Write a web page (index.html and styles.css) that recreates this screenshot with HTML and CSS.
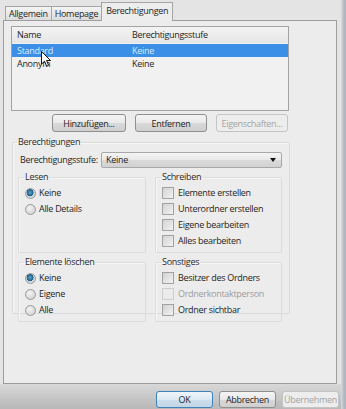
FILE: index.html
```html
<!DOCTYPE html>
<html lang="de">
<head>
    <meta charset="UTF-8">
    <title>Eigenschaften - Berechtigungen</title>
    <link rel="stylesheet" href="styles.css">
</head>
<body>
<div class="window">
    <div class="dialog">
        <div class="tabs">
            <div class="tab">Allgemein</div>
            <div class="tab">Homepage</div>
            <div class="tab active">Berechtigungen</div>
        </div>

        <div class="panel">
            <div class="list">
                <div class="list-head">
                    <span class="col-name">Name</span>
                    <span>Berechtigungsstufe</span>
                </div>
                <div class="list-row selected">
                    <span class="col-name">Standard</span>
                    <span>Keine</span>
                </div>
                <div class="list-row">
                    <span class="col-name">Anonym</span>
                    <span>Keine</span>
                </div>
                <!-- mouse pointer from the screen capture -->
                <svg class="cursor" width="11" height="17" viewBox="0 0 11 17">
                    <path d="M0.5 0.5 L0.5 13 L3.5 10.2 L5.6 15.2 L7.6 14.3 L5.6 9.5 L9.5 9.5 Z" fill="#fff" stroke="#111" stroke-width="1"/>
                </svg>
            </div>

            <div class="list-buttons">
                <button class="btn btn-wide">Hinzufügen...</button>
                <button class="btn">Entfernen</button>
                <button class="btn" disabled>Eigenschaften...</button>
            </div>

            <fieldset class="group">
                <legend>Berechtigungen</legend>
                <div class="level-row">
                    <span class="level-label">Berechtigungsstufe:</span>
                    <div class="dropdown">
                        <span>Keine</span>
                        <span class="arrow"></span>
                    </div>
                </div>

                <div class="sub-groups">
                    <fieldset class="sub">
                        <legend>Lesen</legend>
                        <div class="opt"><span class="radio checked"></span>Keine</div>
                        <div class="opt"><span class="radio"></span>Alle Details</div>
                    </fieldset>

                    <fieldset class="sub">
                        <legend>Schreiben</legend>
                        <div class="opt"><span class="check"></span>Elemente erstellen</div>
                        <div class="opt"><span class="check"></span>Unterordner erstellen</div>
                        <div class="opt"><span class="check"></span>Eigene bearbeiten</div>
                        <div class="opt"><span class="check"></span>Alles bearbeiten</div>
                    </fieldset>

                    <fieldset class="sub">
                        <legend>Elemente löschen</legend>
                        <div class="opt"><span class="radio checked"></span>Keine</div>
                        <div class="opt"><span class="radio"></span>Eigene</div>
                        <div class="opt"><span class="radio"></span>Alle</div>
                    </fieldset>

                    <fieldset class="sub">
                        <legend>Sonstiges</legend>
                        <div class="opt"><span class="check"></span>Besitzer des Ordners</div>
                        <div class="opt disabled"><span class="check"></span>Ordnerkontaktperson</div>
                        <div class="opt"><span class="check"></span>Ordner sichtbar</div>
                    </fieldset>
                </div>
            </fieldset>
        </div>

        <div class="footer">
            <button class="btn btn-default">OK</button>
            <button class="btn">Abbrechen</button>
            <button class="btn" disabled>Übernehmen</button>
        </div>
    </div>
    <div class="frame"></div>
</div>
</body>
</html>
```

FILE: styles.css
```css
body {
    margin: 0;
    font-family: "Open Sans", "Noto Sans", sans-serif;
    font-size: 9px;
    line-height: 12px;
    letter-spacing: -0.3px;
    color: #1e1e1e;
    background-color: #e4e4e4;
}
.window {
    display: flex;
    width: 346px;
    height: 409px;
    overflow: hidden;
}
.dialog {
    width: 341px;
    display: flex;
    flex-direction: column;
}
.frame {
    width: 5px;
    background: linear-gradient(to right, #d2d5da 0, #d2d5da 1px, #b9c0c9 2px, #aab2bd 100%);
}

/* tabs */
.tabs {
    height: 20px;
    display: flex;
    align-items: flex-end;
    padding-left: 5px;
}
.tab {
    height: 13px;
    line-height: 13px;
    padding: 0 3px;
    border: 1px solid #a5a5a5;
    border-bottom: none;
    border-right: none;
    background: linear-gradient(#f4f4f4, #dcdcdc);
}
.tab.active {
    height: 18px;
    line-height: 16px;
    padding: 0 4px;
    margin-bottom: -1px;
    border-right: 1px solid #a5a5a5;
    background: #ededed;
    position: relative;
    z-index: 1;
}

/* tab page */
.panel {
    height: 357px;
    margin: 0 4px 0 3px;
    border: 1px solid #9d9d9d;
    background-color: #ececec;
    padding: 5px 0 0 7px;
    box-sizing: content-box;
}
.list {
    position: relative;
    width: 276px;
    height: 83px;
    border: 1px solid #a3a3a3;
    background-color: #f1f1f1;
}
.list-head, .list-row {
    display: flex;
    padding-left: 5px;
}
.list-head {
    height: 16px;
    line-height: 16px;
    background: linear-gradient(#f3f3f3, #e6e6e6);
}
.list-row {
    height: 13px;
    line-height: 13px;
}
.list-row.selected {
    margin-top: 1px;
    background-color: #3b8fe6;
    color: #dcebfb;
}
.col-name {
    width: 115px;
}
.cursor {
    position: absolute;
    left: 29px;
    top: 24px;
}

.list-buttons {
    width: 277px;
    display: flex;
    justify-content: flex-end;
    gap: 9px;
    margin-top: 3px;
}
.btn {
    height: 18px;
    width: 72px;
    padding: 0;
    font-family: inherit;
    font-size: 9px;
    letter-spacing: inherit;
    color: #1e1e1e;
    border: 1px solid #8f8f8f;
    border-radius: 3px;
    background: linear-gradient(#f4f4f4 0, #e9e9e9 50%, #d9d9d9 51%, #cfcfcf 100%);
}
.btn-wide {
    width: 74px;
}
.btn:disabled {
    color: #a3a3a3;
    border-color: #c4c4c4;
    background: #ededed;
}
.btn-default {
    border-color: #3f82b8;
    background: linear-gradient(#eef5fb 0, #dde9f3 50%, #cddeec 51%, #c3d6e6 100%);
}

/* permission groups */
.group {
    width: 264px;
    height: 172px;
    margin: 4px 0 0 1px;
    padding: 4px 6px 0 6px;
    border: 1px solid #dadada;
    box-shadow: inset 1px 1px 0 #f7f7f7;
    border-radius: 2px;
}
legend {
    padding: 0 1px;
    margin-left: -2px;
    color: #2a2a2a;
}
.level-row {
    display: flex;
    align-items: center;
    height: 16px;
}
.level-label {
    width: 81px;
    padding-left: 1px;
}
.dropdown {
    width: 172px;
    height: 14px;
    line-height: 14px;
    padding: 0 3px 0 4px;
    display: flex;
    justify-content: space-between;
    align-items: center;
    border: 1px solid #a8a8a8;
    border-radius: 2px;
    background: linear-gradient(#f4f4f4 0, #e8e8e8 50%, #dadada 51%, #d2d2d2 100%);
}
.arrow {
    width: 0;
    height: 0;
    border-left: 3px solid transparent;
    border-right: 3px solid transparent;
    border-top: 4px solid #111;
    margin-right: 2px;
}
.sub-groups {
    display: grid;
    grid-template-columns: 128px 127px;
    grid-template-rows: 82px 66px;
    column-gap: 9px;
    row-gap: 3px;
    margin-top: 3px;
    margin-left: -1px;
}
.sub {
    margin: 0;
    padding: 2px 0 0 6px;
    border: 1px solid #dcdcdc;
    box-shadow: inset 1px 1px 0 #f6f6f6;
    border-radius: 2px;
}
.sub legend {
    margin-left: -1px;
}
.opt {
    height: 16px;
    display: flex;
    align-items: center;
    gap: 3px;
}
.radio {
    width: 9px;
    height: 9px;
    border: 1px solid #9a9a9a;
    border-radius: 50%;
    background: radial-gradient(circle at 40% 35%, #f4f4f4 0, #d6d6d6 70%, #c2c2c2 100%);
}
.radio.checked {
    background: radial-gradient(circle at 45% 40%, #5fa3c9 0, #1d5d86 45%, #c6d3dc 50%, #e2e2e2 100%);
}
.check {
    width: 10px;
    height: 10px;
    margin-right: 1px;
    border: 1px solid #a2a2a2;
    background: linear-gradient(135deg, #d3d3d3, #f2f2f2);
}
.opt.disabled {
    color: #9c9c9c;
}
.opt.disabled .check {
    border-color: #cdcdcd;
    background: #ececec;
}

/* dialog buttons */
.footer {
    flex: 1;
    display: flex;
    justify-content: flex-end;
    gap: 6px;
    padding: 7px 2px 0 0;
    background: linear-gradient(#d8d8d8, #b8b8b8);
}
.footer .btn {
    height: 17px;
    width: 57px;
}
```
